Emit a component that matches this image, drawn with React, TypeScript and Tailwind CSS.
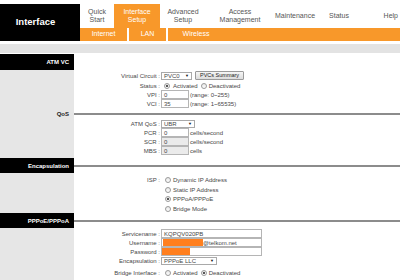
import React from "react";

const ORANGE = "bg-[#f8982a]";

function Radio({ on }: { on?: boolean }) {
  return (
    <span className="relative inline-flex h-[6px] w-[6px] shrink-0 items-center justify-center rounded-full border border-[#9a9a9a] bg-gradient-to-b from-[#e8e8e8] to-white">
      {on && <span className="h-[2px] w-[2px] rounded-full bg-[#222]" />}
    </span>
  );
}

function Select({ value, w }: { value: string; w: string }) {
  return (
    <div className={`flex h-[8px] items-center justify-between border border-[#a9a9a9] bg-white pl-[2px] pr-[2px] ${w}`}>
      <span className="leading-none">{value}</span>
      <span className="text-[4px] leading-none text-[#111]">▼</span>
    </div>
  );
}

function Input({ value, w, disabled, children }: { value?: string; w: string; disabled?: boolean; children?: React.ReactNode }) {
  return (
    <div className={`flex h-[9px] items-center border border-[#b5b5b5] ${disabled ? "bg-[#ebebeb]" : "bg-white"} pl-[2px] ${w}`}>
      {children ?? <span className="leading-none">{value}</span>}
    </div>
  );
}

function Row({ h, label, children }: { h: string; label?: string; children?: React.ReactNode }) {
  return (
    <div className={`grid grid-cols-[74px_1fr] ${h}`}>
      <div className="bg-[#e6e6e6]" />
      <div className="flex items-center">
        <div className="w-[86px] text-right leading-none">{label}</div>
        <div className="ml-[1px] flex items-center">{children}</div>
      </div>
    </div>
  );
}

function Header({ title, h, black = true, line = true }: { title: string; h: string; black?: boolean; line?: boolean }) {
  return (
    <div className={`grid grid-cols-[74px_1fr] ${h}`}>
      <div
        className={`flex items-center justify-end pr-[5px] text-[6px] font-bold leading-none ${
          black ? "bg-black text-white" : "bg-[#e6e6e6] text-[#222]"
        }`}
      >
        {title}
      </div>
      <div className="flex items-center">{line && <div className="h-[2px] w-full bg-[#8c8c8c]" />}</div>
    </div>
  );
}

function Spacer({ h }: { h: string }) {
  return (
    <div className={`grid grid-cols-[74px_1fr] ${h}`}>
      <div className="bg-[#e6e6e6]" />
      <div />
    </div>
  );
}

export default function App() {
  return (
    <div className="h-[280px] w-[400px] overflow-hidden bg-white font-['Liberation_Sans',Arial,sans-serif] text-[6px] text-[#474747]">
      {/* top header */}
      <div className="flex pt-[4px]">
        <div className="flex h-[37px] w-[80px] items-center justify-center bg-black pr-[9px] text-[9.5px] font-bold text-white">
          Interface
        </div>
        <div className="flex flex-1 flex-col">
          <div className="flex h-[24px] text-[7px] leading-[8px] text-[#555]">
            <div className="flex w-[34px] items-center justify-center text-center">
              Quick<br />Start
            </div>
            <div className={`flex w-[46px] items-center justify-center text-center text-white ${ORANGE}`}>
              Interface<br />Setup
            </div>
            <div className="flex w-[46px] items-center justify-center text-center">
              Advanced<br />Setup
            </div>
            <div className="flex w-[68px] items-center justify-center text-center">
              Access<br />Management
            </div>
            <div className="flex w-[42px] items-center justify-center">Maintenance</div>
            <div className="flex w-[46px] items-center justify-center">Status</div>
            <div className="flex flex-1 items-center justify-end pr-[2px]">Help</div>
          </div>
          <div className={`flex h-[13px] text-[7px] text-white ${ORANGE}`}>
            <div className="flex w-[47px] items-center justify-center">Internet</div>
            <div className="w-[2px] bg-white" />
            <div className="flex w-[37px] items-center justify-center">LAN</div>
            <div className="w-[2px] bg-white" />
            <div className="flex w-[56px] items-center justify-center">Wireless</div>
          </div>
        </div>
      </div>
      <div className="h-[3px]" />
      <div className="h-[9px] bg-[#e3e3e3]" />
      <div className="h-[1px]" />

      {/* ATM VC */}
      <Header title="ATM VC" h="h-[16px]" line={false} />
      <Row h="h-[11px]" label="Virtual Circuit :">
        <Select value="PVC0" w="w-[31px]" />
        <div className="ml-[3px] flex h-[9px] items-center rounded-[1px] border border-[#9a9a9a] bg-gradient-to-b from-[#f6f6f6] to-[#dcdcdc] px-[4px] text-[5.5px] leading-none text-[#222]">
          PVCs Summary
        </div>
      </Row>
      <Row h="h-[9px]" label="Status :">
        <span className="ml-[3px]" />
        <Radio on />
        <span className="ml-[3px] leading-none">Activated</span>
        <span className="ml-[3px]" />
        <Radio />
        <span className="ml-[2px] leading-none">Deactivated</span>
      </Row>
      <Row h="h-[9px]" label="VPI :">
        <Input value="0" w="w-[28px]" />
        <span className="ml-[1px] leading-none">(range: 0~255)</span>
      </Row>
      <Row h="h-[9px]" label="VCI :">
        <Input value="35" w="w-[28px]" />
        <span className="ml-[1px] leading-none">(range: 1~65535)</span>
      </Row>

      {/* QoS */}
      <Header title="QoS" h="h-[12px]" black={false} />
      <Row h="h-[8px]" label="ATM QoS :">
        <Select value="UBR" w="w-[34px]" />
      </Row>
      <Row h="h-[9px]" label="PCR :">
        <Input value="0" w="w-[28px]" />
        <span className="ml-[1px] leading-none">cells/second</span>
      </Row>
      <Row h="h-[9px]" label="SCR :">
        <Input value="0" w="w-[28px]" disabled />
        <span className="ml-[1px] leading-none">cells/second</span>
      </Row>
      <Row h="h-[9px]" label="MBS :">
        <Input value="0" w="w-[28px]" disabled />
        <span className="ml-[1px] leading-none">cells</span>
      </Row>
      <Spacer h="h-[3px]" />

      {/* Encapsulation */}
      <Header title="Encapsulation" h="h-[15px]" />
      <Spacer h="h-[2px]" />
      <Row h="h-[10px]" label="ISP :">
        <span className="ml-[4px]" />
        <Radio />
        <span className="ml-[2px] leading-none">Dynamic IP Address</span>
      </Row>
      <Row h="h-[9px]">
        <span className="ml-[4px]" />
        <Radio />
        <span className="ml-[2px] leading-none">Static IP Address</span>
      </Row>
      <Row h="h-[10px]">
        <span className="ml-[4px]" />
        <Radio on />
        <span className="ml-[2px] leading-none">PPPoA/PPPoE</span>
      </Row>
      <Row h="h-[9px]">
        <span className="ml-[4px]" />
        <Radio />
        <span className="ml-[2px] leading-none">Bridge Mode</span>
      </Row>

      {/* PPPoE/PPPoA */}
      <Header title="PPPoE/PPPoA" h="h-[15px]" />
      <Spacer h="h-[1px]" />
      <Row h="h-[9px]" label="Servicename :">
        <Input value="KQPQV020PB" w="w-[101px]" />
      </Row>
      <Row h="h-[9px]" label="Username :">
        <Input w="w-[101px]">
          <div className="-ml-[1px] h-[7px] w-[40px] bg-[#ff7f1e]" />
          <span className="leading-none">@telkom.net</span>
        </Input>
      </Row>
      <Row h="h-[9px]" label="Password :">
        <Input w="w-[101px]">
          <div className="-ml-[2px] h-[7px] w-[28px] bg-[#ff7f1e]" />
        </Input>
      </Row>
      <Row h="h-[9px]" label="Encapsulation :">
        <Select value="PPPoE LLC" w="w-[56px]" />
      </Row>
      <Row h="h-[15px]" label="Bridge Interface :">
        <span className="ml-[4px]" />
        <Radio />
        <span className="ml-[2px] leading-none">Activated</span>
        <span className="ml-[3px]" />
        <Radio on />
        <span className="ml-[2px] leading-none">Deactivated</span>
      </Row>
    </div>
  );
}
